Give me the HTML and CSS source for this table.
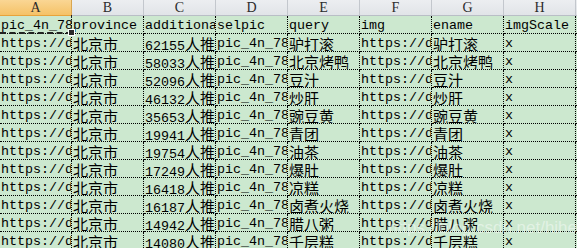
FILE: index.html
```html
<!DOCTYPE html>
<html>
<head>
<meta charset="utf-8">
<link rel="stylesheet" href="styles.css">
</head>
<body>
<div class="sheet">
  <div class="hd sel">A</div><div class="hd">B</div><div class="hd">C</div><div class="hd">D</div><div class="hd">E</div><div class="hd">F</div><div class="hd">G</div><div class="hd">H</div><div class="hd end"></div>

  <div class="c">pic_4n_78xx</div><div class="c">province</div><div class="c">additional</div><div class="c">selpic</div><div class="c">query</div><div class="c">img</div><div class="c">ename</div><div class="c">imgScale</div><div class="c end"></div>

  <div class="c">https://dx</div><div class="c"><span class="zh">北京市</span></div><div class="c">62155<span class="zh">人推荐</span></div><div class="c">pic_4n_78xx</div><div class="c"><span class="zh">驴打滚</span></div><div class="c">https://dx</div><div class="c"><span class="zh">驴打滚</span></div><div class="c">x</div><div class="c end"></div>

  <div class="c">https://dx</div><div class="c"><span class="zh">北京市</span></div><div class="c">58033<span class="zh">人推荐</span></div><div class="c">pic_4n_78xx</div><div class="c"><span class="zh">北京烤鸭</span></div><div class="c">https://dx</div><div class="c"><span class="zh">北京烤鸭</span></div><div class="c">x</div><div class="c end"></div>

  <div class="c">https://dx</div><div class="c"><span class="zh">北京市</span></div><div class="c">52096<span class="zh">人推荐</span></div><div class="c">pic_4n_78xx</div><div class="c"><span class="zh">豆汁</span></div><div class="c">https://dx</div><div class="c"><span class="zh">豆汁</span></div><div class="c">x</div><div class="c end"></div>

  <div class="c">https://dx</div><div class="c"><span class="zh">北京市</span></div><div class="c">46132<span class="zh">人推荐</span></div><div class="c">pic_4n_78xx</div><div class="c"><span class="zh">炒肝</span></div><div class="c">https://dx</div><div class="c"><span class="zh">炒肝</span></div><div class="c">x</div><div class="c end"></div>

  <div class="c">https://dx</div><div class="c"><span class="zh">北京市</span></div><div class="c">35653<span class="zh">人推荐</span></div><div class="c">pic_4n_78xx</div><div class="c"><span class="zh">豌豆黄</span></div><div class="c">https://dx</div><div class="c"><span class="zh">豌豆黄</span></div><div class="c">x</div><div class="c end"></div>

  <div class="c">https://dx</div><div class="c"><span class="zh">北京市</span></div><div class="c">19941<span class="zh">人推荐</span></div><div class="c">pic_4n_78xx</div><div class="c"><span class="zh">青团</span></div><div class="c">https://dx</div><div class="c"><span class="zh">青团</span></div><div class="c">x</div><div class="c end"></div>

  <div class="c">https://dx</div><div class="c"><span class="zh">北京市</span></div><div class="c">19754<span class="zh">人推荐</span></div><div class="c">pic_4n_78xx</div><div class="c"><span class="zh">油茶</span></div><div class="c">https://dx</div><div class="c"><span class="zh">油茶</span></div><div class="c">x</div><div class="c end"></div>

  <div class="c">https://dx</div><div class="c"><span class="zh">北京市</span></div><div class="c">17249<span class="zh">人推荐</span></div><div class="c">pic_4n_78xx</div><div class="c"><span class="zh">爆肚</span></div><div class="c">https://dx</div><div class="c"><span class="zh">爆肚</span></div><div class="c">x</div><div class="c end"></div>

  <div class="c">https://dx</div><div class="c"><span class="zh">北京市</span></div><div class="c">16418<span class="zh">人推荐</span></div><div class="c">pic_4n_78xx</div><div class="c"><span class="zh">凉糕</span></div><div class="c">https://dx</div><div class="c"><span class="zh">凉糕</span></div><div class="c">x</div><div class="c end"></div>

  <div class="c">https://dx</div><div class="c"><span class="zh">北京市</span></div><div class="c">16187<span class="zh">人推荐</span></div><div class="c">pic_4n_78xx</div><div class="c"><span class="zh">卤煮火烧</span></div><div class="c">https://dx</div><div class="c"><span class="zh">卤煮火烧</span></div><div class="c">x</div><div class="c end"></div>

  <div class="c">https://dx</div><div class="c"><span class="zh">北京市</span></div><div class="c">14942<span class="zh">人推荐</span></div><div class="c">pic_4n_78xx</div><div class="c"><span class="zh">腊八粥</span></div><div class="c">https://dx</div><div class="c"><span class="zh">腊八粥</span></div><div class="c">x</div><div class="c end"></div>

  <div class="c">https://dx</div><div class="c"><span class="zh">北京市</span></div><div class="c">14080<span class="zh">人推荐</span></div><div class="c">pic_4n_78xx</div><div class="c"><span class="zh">千层糕</span></div><div class="c">https://dx</div><div class="c"><span class="zh">千层糕</span></div><div class="c">x</div><div class="c end"></div>

  <div class="active"><div class="handle"></div></div>
  <div class="watermark">https://blog.csdn.net/hihell</div>
</div>
</body>
</html>
```

FILE: styles.css
```css
html, body {
  margin: 0;
  padding: 0;
  overflow: hidden;
  background: #cce8cf;
}

.sheet {
  position: relative;
  display: grid;
  grid-template-columns: repeat(8, 72px) 20px;
  grid-template-rows: 16px repeat(13, 18px);
  width: 577px;
  height: 248px;
  overflow: hidden;
}

.hd {
  box-sizing: border-box;
  background: linear-gradient(#eceef1, #e1e4e8);
  border-right: 1px solid #c3c7cd;
  border-bottom: 1px solid #b9bec6;
  font-family: "Liberation Serif", serif;
  font-size: 14px;
  line-height: 15px;
  color: #2b2b2b;
  text-align: center;
}

.hd.sel {
  background: linear-gradient(#fad694, #f5c267);
  border-bottom-color: #e8a33a;
  border-right-color: #d9a650;
}

.c {
  box-sizing: border-box;
  border-right: 1px dotted #000;
  border-bottom: 1px dotted #000;
  overflow: hidden;
  white-space: nowrap;
  padding-left: 1px;
  font-family: "Liberation Mono", "Noto Sans CJK SC", monospace;
  font-size: 13.33px;
  line-height: 20px;
  color: #000;
}

.zh {
  font-family: "Noto Sans CJK SC", sans-serif;
  font-size: 15px;
}

.end {
  border-right: none;
}

.active {
  position: absolute;
  left: 0;
  top: 15px;
  width: 72px;
  height: 19px;
  box-sizing: border-box;
  border-right: 1px dashed #222;
  border-bottom: 2px dashed #222;
}

.handle {
  position: absolute;
  right: -4px;
  bottom: -4px;
  width: 5px;
  height: 5px;
  background: #2a2a2a;
  border: 1px solid #fff;
}

.watermark {
  position: absolute;
  left: 388px;
  top: 218px;
  font-family: "Liberation Sans", sans-serif;
  font-size: 17px;
  color: rgba(255, 255, 255, 0.45);
  white-space: nowrap;
}
```
